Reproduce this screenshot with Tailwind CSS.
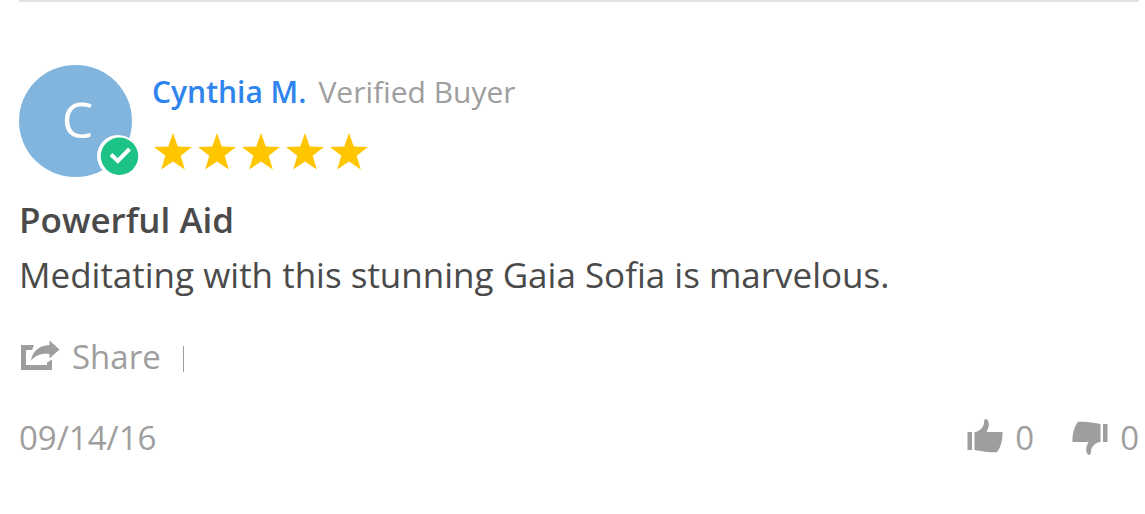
<!DOCTYPE html>
<html lang="en">
<head>
  <meta charset="UTF-8">
  <meta name="viewport" content="width=device-width, initial-scale=1.0">
  <title>Customer Review</title>
  <script src="https://cdn.jsdelivr.net/npm/@tailwindcss/browser@4"></script>
</head>
<body class="bg-white font-['Open_Sans',sans-serif] text-[#4a4a4a]">
  <!-- shapes used more than once -->
  <svg class="hidden" aria-hidden="true">
    <symbol id="star" viewBox="0 0 38 37">
      <path d="M19 0 L23.8 13.6 L38 14.1 L26.7 22.8 L30.8 36.6 L19 28.6 L7.2 36.6 L11.3 22.8 L0 14.1 L14.2 13.6 Z"></path>
    </symbol>
    <symbol id="thumb" viewBox="0 0 36 36">
      <path d="M0.5 14 H5 V32 H0.5 Z"></path>
      <path d="M7.5 14 C12.5 13.5 17.5 9 17.2 3 C17.2 1 19 0.3 20.3 1.8 C22.8 5 22 9.5 19.5 14 L35.5 14 C35.8 21.5 34 29 30 34.3 C22 34.3 15 33.8 7.5 32 Z"></path>
    </symbol>
  </svg>

  <article class="ml-[19px] mr-1.5 border-t-2 border-[#e3e3e3]">
    <header class="mt-[63px] flex gap-5">
      <div class="relative grid h-28 w-[113px] shrink-0 place-items-center rounded-full bg-[#82b5dd]">
        <span class="pb-1 pl-1 text-[50px] leading-none text-white">C</span>
        <svg class="absolute -right-[7px] bottom-0 h-[42px] w-[42px]" viewBox="0 0 42 42" role="img" aria-label="Verified">
          <circle cx="21" cy="21" r="21" fill="#fff"></circle>
          <circle cx="22.5" cy="21.2" r="18.7" fill="#1cc286"></circle>
          <path d="M14 19.5 L20.8 26 L32.5 14" fill="none" stroke="#fff" stroke-width="4"></path>
        </svg>
      </div>
      <div class="pt-[7px]">
        <div class="flex gap-3 text-[30px] leading-10">
          <span class="font-semibold text-[#2f84ed]">Cynthia M.</span>
          <span class="text-[#9e9e9e]">Verified Buyer</span>
        </div>
        <div class="mt-[21px] flex gap-1.5 pl-0.5 text-[#ffc600]" role="img" aria-label="5 out of 5 stars">
          <svg class="h-[37px] w-[38px] fill-current"><use href="#star"></use></svg>
          <svg class="h-[37px] w-[38px] fill-current"><use href="#star"></use></svg>
          <svg class="h-[37px] w-[38px] fill-current"><use href="#star"></use></svg>
          <svg class="h-[37px] w-[38px] fill-current"><use href="#star"></use></svg>
          <svg class="h-[37px] w-[38px] fill-current"><use href="#star"></use></svg>
        </div>
      </div>
    </header>

    <div class="mt-[15px] text-[35px] leading-[55px]">
      <h2 class="font-semibold">Powerful Aid</h2>
      <p>Meditating with this stunning Gaia Sofia is marvelous.</p>
    </div>

    <div class="mt-[31px] flex items-center text-[33px] leading-[48px] text-[#9e9e9e]">
      <button type="button" class="flex items-center gap-3">
        <svg class="mb-0.5 ml-0.5 h-8 w-[39px] fill-current" viewBox="0 0 39 32" aria-hidden="true">
          <path d="M0 5 H13 L11 10 H5 V25 H26 V22.5 L31 19.5 V30 H0 Z"></path>
          <path d="M10 20.5 C11.5 11.5 18 5.5 28.5 5 V0.5 L38.5 9.5 L28.5 18.5 V14 C20.5 13 15 15 10 20.5 Z"></path>
        </svg>
        Share
      </button>
      <span class="mt-1 ml-[22px] h-[26px] w-px bg-[#9e9e9e]"></span>
    </div>

    <footer class="mt-[33px] flex items-center justify-between text-[33px] leading-[48px] text-[#9e9e9e]">
      <time datetime="2016-09-14">09/14/16</time>
      <div class="flex items-center gap-[38px]">
        <button type="button" class="flex items-center gap-3" aria-label="Helpful, 0 votes">
          <svg class="mb-1 h-9 w-9 fill-current" aria-hidden="true"><use href="#thumb"></use></svg>
          <span>0</span>
        </button>
        <button type="button" class="flex items-center gap-3" aria-label="Not helpful, 0 votes">
          <svg class="h-9 w-9 rotate-180 fill-current" aria-hidden="true"><use href="#thumb"></use></svg>
          <span>0</span>
        </button>
      </div>
    </footer>
  </article>
</body>
</html>
